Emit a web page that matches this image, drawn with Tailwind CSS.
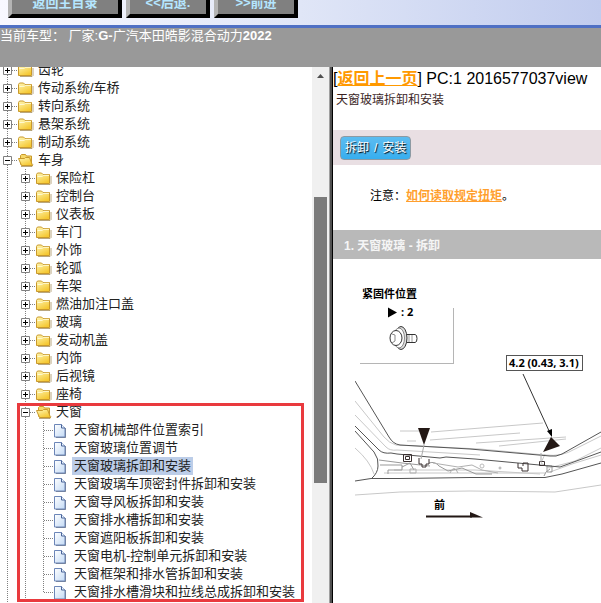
<!DOCTYPE html>
<html lang="zh-CN">
<head>
    <meta charset="UTF-8">
    <meta name="viewport" content="width=device-width, initial-scale=1.0">
    <title>天窗玻璃拆卸和安装</title>
    <script src="https://cdn.jsdelivr.net/npm/@tailwindcss/browser@4"></script>
</head>
<body class="h-screen flex flex-col overflow-hidden bg-white text-[13px] text-black font-['Liberation_Sans','Noto_Sans_CJK_SC',sans-serif]">

    <!-- Icônes de l'arbre -->
    <svg class="absolute w-0 h-0" aria-hidden="true">
        <defs>
            <linearGradient id="gold" x1="0" y1="0" x2="0.6" y2="1">
                <stop offset="0" stop-color="#fff7b5"/>
                <stop offset="1" stop-color="#f5c832"/>
            </linearGradient>
            <linearGradient id="sheet" x1="0" y1="0" x2="1" y2="1">
                <stop offset="0" stop-color="#ffffff"/>
                <stop offset="1" stop-color="#c3daf5"/>
            </linearGradient>
        </defs>
        <symbol id="line" viewBox="0 0 18 18">
            <path d="M7.500 0V18" stroke="#808080" stroke-dasharray="1 1" fill="none"/>
        </symbol>
        <symbol id="plus" viewBox="0 0 18 18">
            <path d="M7.500 0V18M12 9.500H18" stroke="#808080" stroke-dasharray="1 1" fill="none"/>
            <path d="M3.500 5.500h8v8h-8z" fill="#fff" stroke="#808080"/>
            <path d="M5 9.500h5M7.500 7v5" stroke="#000"/>
        </symbol>
        <symbol id="minus" viewBox="0 0 18 18">
            <path d="M7.500 0V18M12 9.500H18" stroke="#808080" stroke-dasharray="1 1" fill="none"/>
            <path d="M3.500 5.500h8v8h-8z" fill="#fff" stroke="#808080"/>
            <path d="M5 9.500h5" stroke="#000"/>
        </symbol>
        <symbol id="join" viewBox="0 0 18 18">
            <path d="M7.500 0V18M8 9.500H18" stroke="#808080" stroke-dasharray="1 1" fill="none"/>
        </symbol>
        <symbol id="joinbottom" viewBox="0 0 18 18">
            <path d="M7.500 0V9M8 9.500H18" stroke="#808080" stroke-dasharray="1 1" fill="none"/>
        </symbol>
        <symbol id="folder" viewBox="0 0 18 18">
            <path d="M2 15.500h12l1-1V7" stroke="#8a6d2a" stroke-opacity=".6" fill="none"/>
            <path d="M.5 5.500l1-1.500h4l1.500 1.500h6.500v9H.5z" fill="url(#gold)" stroke="#c9992b"/>
            <path d="M1.500 7.500l5-.2 1-1h5.500" stroke="#fffbd8" fill="none"/>
        </symbol>
        <symbol id="folderopen" viewBox="0 0 18 18">
            <path d="M3 15.500h11l1-2" stroke="#8a6d2a" stroke-opacity=".6" fill="none"/>
            <path d="M2.500 13V4.500l1-1h4l1 1.500h5v9h-10z" fill="#f6d869" stroke="#c9992b"/>
            <path d="M.5 7.500h6l1-1h4l3 8h-11z" fill="url(#gold)" stroke="#c9992b"/>
        </symbol>
        <symbol id="page" viewBox="0 0 18 18">
            <path d="M2 16.500h9.500V7" stroke="#404a60" stroke-opacity=".7" fill="none"/>
            <path d="M.5 3.500h7l3.500 3.500v9H.5z" fill="url(#sheet)" stroke="#6c86b8"/>
            <path d="M7.500 3.500V7H11" fill="#e8f1fc" stroke="#4a6499"/>
        </symbol>
    </svg>

    <header class="shrink-0">
        <nav class="h-7 flex items-start gap-1 pl-2 overflow-hidden border-b-3 border-[#4f70c4] bg-linear-to-r from-[#f8f8ff] via-[#e0e6f7] to-[#c1ccee]">
            <button type="button" class="w-[114px] h-[30px] -mt-3 bg-[#808080] border-4 border-l-[#b4b4b4] border-t-[#b4b4b4] border-r-black border-b-black font-bold text-[#b5e6ff] leading-4 whitespace-nowrap">返回主目录</button>
            <button type="button" class="w-[84px] h-[30px] -mt-3 bg-[#808080] border-4 border-l-[#b4b4b4] border-t-[#b4b4b4] border-r-black border-b-black font-bold text-[#b5e6ff] leading-4 whitespace-nowrap">&lt;&lt;后退.</button>
            <button type="button" class="w-[84px] h-[30px] -mt-3 bg-[#808080] border-4 border-l-[#b4b4b4] border-t-[#b4b4b4] border-r-black border-b-black font-bold text-[#b5e6ff] leading-4 whitespace-nowrap">&gt;&gt;前进</button>
        </nav>
        <div class="h-[39px] bg-[#999999] text-white leading-4 whitespace-nowrap">当前车型： 厂家:<b>G-</b>广汽本田皓影混合动力<b>2022</b></div>
    </header>

    <div class="flex-1 min-h-0 flex">
        <!-- Arbre de navigation -->
        <aside class="w-[333px] shrink-0 flex overflow-hidden border-r border-black">
            <div class="flex-1 overflow-hidden">
                <div id="tree" class="-mt-1.5 text-[#222222]"></div>
            </div>
            <div class="w-[17px] flex flex-col items-center bg-[#f0f0f0]">
                <svg class="w-[9px] h-[17px] shrink-0" viewBox="0 0 9 17"><path d="M1 11h7L4.500 7z" fill="#505050"/></svg>
                <div class="h-[113px] shrink"></div>
                <div class="w-[13px] h-[286px] shrink-0 bg-[#7b7b7b]"></div>
            </div>
            <div class="w-[3px] border-l border-[#a0a0a0] bg-[#505050]"></div>
        </aside>

        <main class="flex-1 min-w-0 overflow-hidden">
            <p class="text-base leading-6 whitespace-nowrap">[<a href="#" class="font-bold text-[#ff9900] underline">返回上一页</a>] PC:1 2016577037view</p>
            <h1 class="pl-[3px] text-xs leading-[18px] text-[#3b1f1f]">天窗玻璃拆卸和安装</h1>

            <div class="mt-[21px] h-[35px] pl-[7px] flex items-center bg-[#e9dfe3]">
                <button type="button" class="h-6 px-1 flex items-center gap-[5px] rounded border border-[#8d9aa3] bg-linear-to-b from-[#5cbcf0] to-[#36aeef] text-xs text-white text-shadow-[1px_1px_1px_#000000] whitespace-nowrap"><span>拆卸</span><span>/</span><span>安装</span></button>
            </div>

            <p class="pl-[37px] pt-[22px] pb-[25px] text-xs leading-[18px] whitespace-nowrap">注意：<a href="#" class="font-bold text-[#ff9f2e] underline">如何读取规定扭矩</a>。</p>

            <h2 class="h-[29px] pt-0.5 pl-[11px] bg-[#b9b9b9] text-xs leading-[29px] font-bold text-[#f5f5f5] whitespace-nowrap">1. 天窗玻璃 - 拆卸</h2>

            <!-- Schéma du toit ouvrant -->
            <svg class="ml-[22px] mt-[26px] w-[246px] h-[240px] font-['Open_Sans','Noto_Sans_CJK_SC',sans-serif]" viewBox="355 285 246 240" fill="none">
                <text x="362" y="298" class="text-[11px] font-bold" fill="#000">紧固件位置</text>
                <path d="M388 307.500v10l9-5z" fill="#000"/>
                <text x="401" y="316" class="text-[11px] font-bold" fill="#000">: 2</text>
                <path d="M453.500 308V363.500M360 363.500H454" stroke="#b5b5b5"/>

                <!-- vis -->
                <g stroke="#333">
                    <path d="M406 334.500h9q2 0 2 4t-2 4h-9z" fill="#fff"/>
                    <path d="M409 335v7M412 335v7" stroke="#999"/>
                    <ellipse cx="401" cy="338" rx="6" ry="11.500" fill="#ddd"/>
                    <ellipse cx="399" cy="338" rx="5.500" ry="10" fill="#fff" stroke="#888"/>
                    <ellipse cx="396" cy="338" rx="6" ry="7.500" fill="#fff"/>
                    <path d="M392 334l3 1v6l-3 2" stroke="#888"/>
                </g>

                <!-- traits clairs -->
                <g stroke="#c8c8c8">
                    <path d="M355 401L384 437Q389 443 396 445L480 449L545 455Q562 457 575 449L601 436"/>
                    <path d="M355 415L386 447Q390 451 397 450L480 455"/>
                    <path d="M355 448Q370 461 374 474"/>
                    <path d="M355 495L400 492L470 491L555 492L601 485"/>
                    <path d="M400 431H420M407 441H416M431 432L543 423M430 440L520 433M476 443L566 437M499 446L566 439"/>
                    <path d="M545 454L541 463L549 468L575 461L601 448M550 472L572 464L601 455"/>
                    <path d="M384 473H545M394 470H475L540 474"/>
                </g>

                <!-- mécanisme -->
                <g stroke="#999">
                    <path d="M379 460L402 463L430 466M380 465H402V470H388V474M402 467L410 463L414 470M429 463Q435 461 439 466L448 471L462 468L476 474H492"/>
                    <path d="M433 463L458 467L472 465L482 470L498 473M450 473Q454 464 458 473M410 469h6v4h-6z" stroke="#b0b0b0"/>
                    <circle cx="482" cy="466" r="2" stroke="#bbb"/>
                    <circle cx="500" cy="468" r="1" stroke="#aaa"/>
                    <path d="M547 466h5v6h-5z M544 476l2-4 4-3" stroke="#999"/>
                </g>

                <!-- contours foncés -->
                <g stroke="#555">
                    <path d="M355 381L389 437Q393 444 400 445L470 449L550 456Q556 457 562 454L601 432"/>
                    <path d="M355 426L379 450Q383 454 391 453L397 454L440 458L446 457L475 459L550 466L560 467L601 452"/>
                    <path d="M355 431L374 452Q379 459 378 466Q378 473 371 479"/>
                    <path d="M355 481L371 478.500H400L470 477.500H545L562 474L601 463"/>
                </g>
                <g stroke="#3a3030">
                    <path d="M403.500 454.500h8v7h-8z M405.500 456.500h4v3h-4z"/>
                    <path d="M419 458v6h3v3h4v-3h3v-5"/>
                    <path d="M518 463v5h4v3h6v-8h-5v3"/>
                    <path d="M539.500 461.500h5v4h-5z"/>
                </g>

                <!-- repères -->
                <path d="M418 428L430 428L424 445z" fill="#231815"/>
                <path d="M424 445L421 459M541 453v9" stroke="#aaa"/>
                <path d="M551 437L560 446L543 452z" fill="#231815"/>
                <path d="M523 374L550 433" stroke="#333"/>
                <path d="M547 431l5-2v8z" fill="#000"/>
                <rect x="506.500" y="355.500" width="76" height="15" fill="#fff" stroke="#555"/>
                <text x="509" y="367" class="text-[11px] font-bold" fill="#000">4.2 (0.43, 3.1)</text>
                <text x="434" y="509" class="text-[11px] font-bold" fill="#000">前</text>
                <path d="M426 516.500H472" stroke="#231815" stroke-width="2"/>
                <path d="M470 512L483 517.500H470z" fill="#231815"/>
            </svg>
        </main>
    </div>

    <script>
        const tree = document.getElementById('tree');

        // Construit une ligne : colonnes de guides, icône puis libellé
        function row(cells, label, selected = false) {
            const icons = cells.map(id => `<svg class="w-[18px] h-[18px] shrink-0"><use href="#${id}"/></svg>`).join('');
            const link = label ? `<a href="#" class="${selected ? 'bg-[#bccde8] px-0.5' : 'px-0.5'}">${label}</a>` : '';
            return `<div class="h-[18px] flex items-center whitespace-nowrap leading-[18px]">${icons}${link}</div>`;
        }

        const systems = ['齿轮', '传动系统/车桥', '转向系统', '悬架系统', '制动系统'];
        const body = ['保险杠', '控制台', '仪表板', '车门', '外饰', '轮弧', '车架', '燃油加注口盖', '玻璃', '发动机盖', '内饰', '后视镜', '座椅'];
        const sunroof = [
            '天窗机械部件位置索引',
            '天窗玻璃位置调节',
            '天窗玻璃拆卸和安装',
            '天窗玻璃车顶密封件拆卸和安装',
            '天窗导风板拆卸和安装',
            '天窗排水槽拆卸和安装',
            '天窗遮阳板拆卸和安装',
            '天窗电机-控制单元拆卸和安装',
            '天窗框架和排水管拆卸和安装',
            '天窗排水槽滑块和拉线总成拆卸和安装'
        ];

        let html = systems.map(name => row(['plus', 'folder'], name)).join('');
        html += row(['minus', 'folderopen'], '车身');
        html += body.map(name => row(['line', 'plus', 'folder'], name)).join('');

        // Groupe encadré en rouge
        html += '<div class="relative">';
        html += row(['line', 'minus', 'folderopen'], '天窗');
        html += sunroof.map((name, i) => {
            const join = i === sunroof.length - 1 ? 'joinbottom' : 'join';
            return row(['line', 'line', join, 'page'], name, i === 2);
        }).join('');
        html += '<div class="absolute top-0 -bottom-px left-[17px] w-[287px] border-3 border-[#e93a3e] pointer-events-none"></div></div>';
        html += row(['line', 'line'], '');

        tree.innerHTML = html;
    </script>
</body>
</html>
